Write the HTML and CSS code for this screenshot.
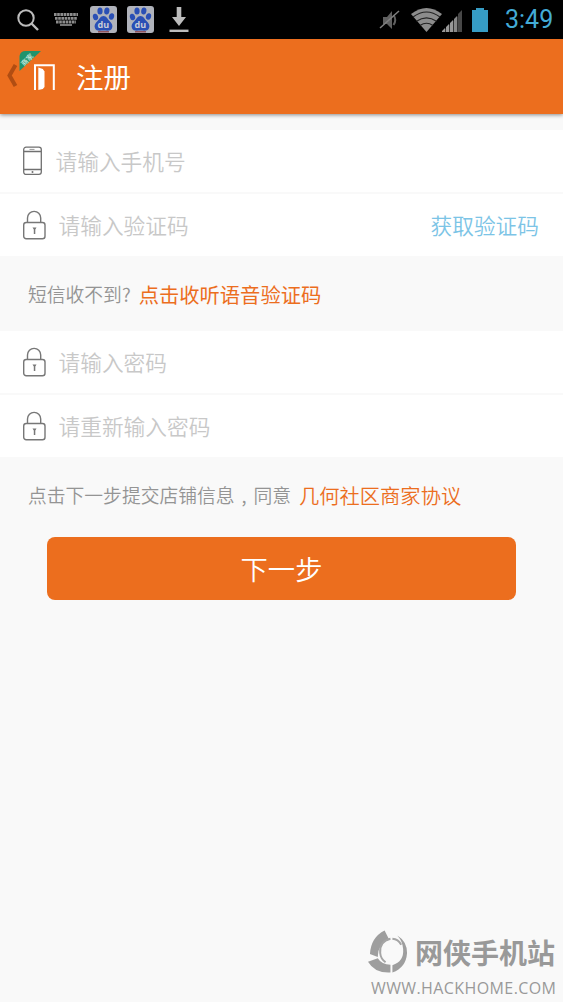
FILE: index.html
```html
<!DOCTYPE html>
<html lang="zh-CN">
<head>
<meta charset="utf-8">
<title>注册</title>
<link rel="stylesheet" href="styles.css">
</head>
<body>
<div class="status">
  <svg class="st-search" viewBox="0 0 22 22"><circle cx="9" cy="9" r="7.700" fill="none" stroke="#bcbcbc" stroke-width="2"/><path d="M14.500 14.500L21 21" stroke="#bcbcbc" stroke-width="2.400"/></svg>
  <svg class="st-keys" viewBox="0 0 24 13"><g stroke="#8c8c8c" stroke-width="2.800" fill="none"><path d="M0 1.500h24M1 5.300h22M2 9h20" stroke-dasharray="2.600 .6"/><path d="M6 12h12" stroke-width="1.700"/></g></svg>
  <svg class="st-paw" viewBox="0 0 27 27">
    <g id="paw">
      <rect width="27" height="27" rx="3" fill="#b0b3bb"/>
      <g fill="#2a4fb5">
        <ellipse cx="5.500" cy="11" rx="2.600" ry="3.300" transform="rotate(-15 5.500 11)"/>
        <ellipse cx="10" cy="5" rx="2.600" ry="3.500"/>
        <ellipse cx="16.800" cy="5" rx="2.600" ry="3.500" transform="rotate(10 16.800 5)"/>
        <ellipse cx="21.500" cy="10.500" rx="2.600" ry="3.300" transform="rotate(15 21.500 10.500)"/>
        <path d="M13.500 10c3 0 4 3 6 5 2.400 2.300 3.700 4.500 2.500 7.200-1.400 3.300-5 2.300-8.500 2.300s-7.100 1-8.500-2.300c-1.200-2.700.1-4.900 2.500-7.200 2-2 3-5 6-5z"/>
      </g>
      <path d="M8 25.800h11" stroke="#8a3b45" stroke-width="1.200"/>
      <text x="13.300" y="22" text-anchor="middle" class="paw-text">du</text>
    </g>
  </svg>
  <svg class="st-paw second" viewBox="0 0 27 27"><use href="#paw"/></svg>
  <svg class="st-down" viewBox="0 0 20 26"><path d="M7.700 0h4.600v10h4.700L10 19 3 10h4.700z" fill="#bcbcbc"/><path d="M.5 23.800h19" stroke="#bcbcbc" stroke-width="2.400"/></svg>
  <span class="spacer"></span>
  <svg class="st-mute" viewBox="0 0 21 22"><path d="M4 8h4l5-6v18l-5-5H4z" fill="#606060"/><path d="M14.500 6q3.500 5 0 10" fill="none" stroke="#606060" stroke-width="2"/><path d="M1 19L20 2" stroke="#808080" stroke-width="1.500"/></svg>
  <svg class="st-wifi" viewBox="0 0 31 24"><path d="M15.500 24L0 6Q15.500-6 31 6z" fill="#8c8c8c"/><g fill="none" stroke="#222" stroke-width="1.200"><path d="M2 9Q15.500-1 29 9M5.500 13.300q10-6.800 20 0M9 17.500q6.500-4.500 13 0"/></g></svg>
  <svg class="st-signal" viewBox="0 0 21 24"><path d="M0 24L20 4v20z" fill="#333"/><path d="M0 24v-1l3-3v4zM4 24v-5l3-3v8zM8 24v-9l3-3v12z" fill="#989898"/><path d="M12 24V11l3-3v16z" fill="#888"/><path d="M16 24V6l4-4v22z" fill="#484848"/></svg>
  <svg class="st-battery" viewBox="0 0 16 24"><path d="M4 0h8v2h4v22H0V2h4z" fill="#369cc4"/></svg>
  <span class="clock">3:49</span>
</div>

<header class="bar">
  <svg class="back" viewBox="0 0 58 60">
    <path d="M15.500 27L9.500 37.500 15.500 48" fill="none" stroke="#b14d12" stroke-width="4"/>
    <path d="M19.500 33V18q1-5 6-5h15.500z" fill="#20936c"/>
    <text class="tag" text-anchor="middle" transform="translate(29 23.500) rotate(-45)">商家</text>
    <path d="M35 52V27.300h18.800V52" fill="none" stroke="#fff" stroke-width="2"/>
    <path d="M38.300 29.500l4.500 1.500 1.700 2.500V49l-1.700 2-4.500 1z" fill="#fff"/>
  </svg>
  <h1 class="title">注册</h1>
</header>

<main>
  <section class="group first">
    <div class="row phone-row">
      <svg class="phone" viewBox="0 0 20 30"><g fill="none" stroke="#707070" stroke-width="1.300"><rect x="1.200" y="1.200" width="17.600" height="27.200" rx="2.400"/><path d="M1.500 5.500h17M1.500 23.500h17"/></g><path d="M7 3.400h5" stroke="#999"/><circle cx="10" cy="25.900" r="1" fill="#707070"/></svg>
      <span class="hint">请输入手机号</span>
    </div>
    <div class="row">
      <svg class="lock" viewBox="0 0 24 30">
        <g id="lock">
          <path d="M5.500 12V8a6.600 6.600 0 0 1 13.200 0V12" fill="none" stroke="#777" stroke-width="1.400"/>
          <rect x="1.700" y="12.500" width="21.300" height="16.300" rx="2.500" fill="none" stroke="#777" stroke-width="1.400"/>
          <path d="M10.500 17.500h4l-1.200 2v4.500h-1.500v-4.500z" fill="#777"/>
        </g>
      </svg>
      <span class="hint">请输入验证码</span>
      <a class="get-code">获取验证码</a>
    </div>
  </section>
  <p class="note voice">短信收不到?<a class="link voice-link">点击收听语音验证码</a></p>
  <section class="group">
    <div class="row">
      <svg class="lock" viewBox="0 0 24 30"><use href="#lock"/></svg>
      <span class="hint">请输入密码</span>
    </div>
    <div class="row">
      <svg class="lock" viewBox="0 0 24 30"><use href="#lock"/></svg>
      <span class="hint">请重新输入密码</span>
    </div>
  </section>
  <p class="note terms">点击下一步提交店铺信息<span class="comma">,</span>同意<a class="link terms-link">几何社区商家协议</a></p>
  <button class="next">下一步</button>
</main>

<footer class="mark">
  <div class="brand">
    <svg class="logo" viewBox="0 0 42 44">
      <g fill="#9e9e9e">
        <path d="M17 0L21.500 9Q10 14 10 27L2 24Q3 7 17 0z"/>
        <path d="M0 32L10 28.500Q14 35 23 35V43Q7 44 0 32z"/>
        <path d="M25 43V35.500Q37 32 36 19 35.500 11 30 5 40 11 40 23 39 38 25 43z"/>
      </g>
      <path d="M23 8.500Q11.500 11 12.500 23 13 29 18 32.500M25 8.500Q31 9 34 14.500" fill="none" stroke="#a5a5a5" stroke-width="2"/>
    </svg>
    <span class="brand-name">网侠手机站</span>
  </div>
  <div class="url">WWW.HACKHOME.COM</div>
</footer>
</body>
</html>
```
FILE: styles.css
```css
* { box-sizing: border-box; }
body {
  margin: 0;
  height: 1002px;
  display: flex;
  flex-direction: column;
  background: #f9f9f9;
  font-family: "Noto Sans CJK SC", sans-serif;
  font-weight: 350;
  overflow: hidden;
}
svg { display: block; flex: none; }

.status { display: flex; align-items: center; height: 39px; flex: none; padding: 0 10px 0 17px; background: #000; }
.st-search { width: 22px; height: 22px; }
.st-keys { width: 24px; height: 13px; margin-left: 15px; }
.st-paw { width: 27px; height: 27px; margin-left: 12px; }
.st-paw.second { margin-left: 10px; }
.st-down { width: 20px; height: 26px; margin-left: 15px; }
.paw-text { font: 700 9px "Open Sans", sans-serif; fill: #c9ccd6; }
.spacer { flex: 1; }
.st-mute { width: 21px; height: 22px; }
.st-wifi { width: 31px; height: 24px; margin-left: 11px; }
.st-signal { width: 21px; height: 24px; }
.st-battery { width: 16px; height: 24px; margin-left: 9px; }
.clock { width: 48px; margin-left: 17px; font: 400 25px/41px Roboto, sans-serif; color: #43abd6; white-space: nowrap; }

.bar { display: flex; height: 75px; flex: none; background: #ec6e1e; box-shadow: 0 1px 4px rgba(0, 0, 0, .45); }
.back { width: 58px; height: 60px; margin-top: -1px; }
.tag { font-size: 7px; font-weight: 500; fill: #d5f0e4; }
.title { margin: 0 0 0 18px; font-size: 27.500px; font-weight: 400; line-height: 75px; color: #fff; }

main { display: flex; flex-direction: column; }
.group { display: flex; flex-direction: column; gap: 2px; }
.group.first { margin-top: 16px; }
.row { display: flex; align-items: center; height: 62px; padding: 0 24px 0 22px; background: #fff; }
.phone { width: 21px; height: 30px; }
.lock { width: 24px; height: 30px; }
.hint { margin-left: 12.500px; font-size: 21.700px; line-height: 32px; color: #c8c8c8; }
.get-code { margin-left: auto; font-size: 21.700px; line-height: 32px; color: #7cc4e6; }
.note { display: flex; align-items: center; margin: 0; padding-left: 28px; font-size: 18.800px; color: #949494; white-space: nowrap; }
.voice { height: 75px; }
.terms { height: 75px; }
.link { font-size: 20.300px; font-weight: 400; color: #ec6e1e; }
.voice-link { margin-left: 8px; }
.terms-link { margin-left: 8px; font-weight: 350; }
.comma { width: 1em; text-align: center; }
.next { width: 469px; height: 63px; margin: 5px 0 0 47px; padding: 0; border: 0; border-radius: 8px; background: #ec6e1e; color: #fff; font: 350 27.300px/63px "Noto Sans CJK SC", sans-serif; }

.mark { display: flex; flex-direction: column; margin: auto 6px 0 368px; height: 73px; color: #999; }
.brand { display: flex; align-items: center; gap: 6px; height: 46px; }
.logo { width: 41px; height: 44px; }
.brand-name { font-size: 28px; font-weight: 700; line-height: 46px; white-space: nowrap; }
.url { padding-left: 3px; font: 400 16px/26px "Open Sans", sans-serif; letter-spacing: .4px; white-space: nowrap; }
```
